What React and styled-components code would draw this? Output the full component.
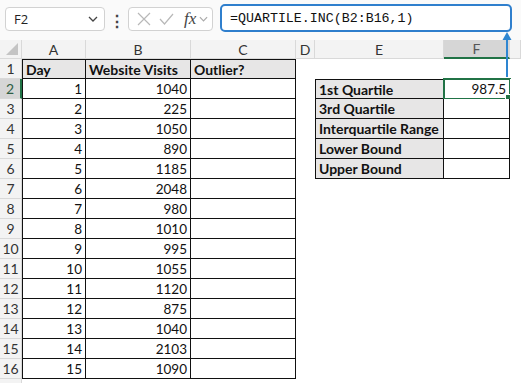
import React from "react";
import styled, { createGlobalStyle } from "styled-components";

const visits = [1040, 225, 1050, 890, 1185, 2048, 980, 1010, 995, 1055, 1120, 875, 1040, 2103, 1090];
const stats = ["1st Quartile", "3rd Quartile", "Interquartile Range", "Lower Bound", "Upper Bound"];
const cols = ["A", "B", "C", "D", "E", "F"];

export default function App() {
  const rows = [];
  for (let r = 1; r <= 17; r++) {
    const inTable = r <= 16;
    const statIdx = r - 2;
    const hasStat = statIdx >= 0 && statIdx < stats.length;
    rows.push(
      <React.Fragment key={r}>
        <RowHead $active={r === 2}>{inTable ? r : ""}</RowHead>
        <Cell $box={inTable} $left $top={r === 1} $head={r === 1} $align={r === 1 ? "left" : "right"}>
          {r === 1 ? "Day" : inTable ? r - 1 : ""}
        </Cell>
        <Cell $box={inTable} $top={r === 1} $head={r === 1} $align={r === 1 ? "left" : "right"}>
          {r === 1 ? "Website Visits" : inTable ? visits[r - 2] : ""}
        </Cell>
        <Cell $box={inTable} $top={r === 1} $head={r === 1}>
          {r === 1 ? "Outlier?" : ""}
        </Cell>
        <Cell />
        <Cell $box={hasStat} $left $top={r === 2} $head={hasStat}>
          {hasStat ? stats[statIdx] : ""}
        </Cell>
        <Cell $box={hasStat} $top={r === 2} $align="right" $selected={r === 2}>
          {r === 2 ? "987.5" : ""}
          {r === 2 && <FillHandle />}
        </Cell>
        <Cell />
      </React.Fragment>
    );
  }

  return (
    <Page>
      <Global />
      <Toolbar>
        <NameBox>
          <span>F2</span>
          <Chevron viewBox="0 0 10 6"><path d="M1 1l4 4 4-4" /></Chevron>
        </NameBox>
        <Dots>⋮</Dots>
        <FnBox>
          <svg width="14" height="14" viewBox="0 0 14 14" stroke="#b8b8b8" strokeWidth="1.2" fill="none">
            <path d="M1 1l12 12M13 1L1 13" />
          </svg>
          <svg width="15" height="12" viewBox="0 0 15 12" stroke="#b8b8b8" strokeWidth="1.2" fill="none">
            <path d="M1 6l4.5 5L14 1" />
          </svg>
          <Fx>fx</Fx>
          <Chevron viewBox="0 0 10 6" $small><path d="M1 1l4 4 4-4" /></Chevron>
        </FnBox>
        <Formula>=QUARTILE.INC(B2:B16,1)</Formula>
      </Toolbar>
      <Sheet>
        <Corner>
          <svg width="12" height="12" viewBox="0 0 12 12"><path d="M12 0V12H0z" fill="#c4c4c4" /></svg>
        </Corner>
        {cols.map((c) => (
          <ColHead key={c} $active={c === "F"}>{c}</ColHead>
        ))}
        <ColHead />
        {rows}
        <Arrow width="10" height="46" viewBox="0 0 10 46">
          <path d="M5 46V4" stroke="#2e86d1" strokeWidth="2" />
          <path d="M0.5 9L5 1l4.5 8z" fill="#2e86d1" />
        </Arrow>
      </Sheet>
    </Page>
  );
}

const Global = createGlobalStyle`
  body {
    margin: 0;
    background: #fff;
    font-family: Lato, "Liberation Sans", sans-serif;
    overflow: hidden;
  }
`;

const Page = styled.div`
  width: 521px;
  height: 383px;
  overflow: hidden;
  position: relative;
`;

const Toolbar = styled.div`
  height: 40px;
  display: flex;
  align-items: flex-start;
  padding: 4px 9px 0 5px;
  box-sizing: border-box;
  background: #fafafa;
`;

const NameBox = styled.div`
  margin-top: 3px;
  width: 100px;
  height: 24px;
  box-sizing: border-box;
  border: 1px solid #d2d2d2;
  border-radius: 4px;
  background: #fff;
  display: flex;
  align-items: center;
  justify-content: space-between;
  padding: 0 6px 0 8px;
  font-family: "Open Sans", sans-serif;
  font-size: 13px;
  color: #222;
`;

const Chevron = styled.svg`
  width: ${(p) => (p.$small ? 9 : 10)}px;
  height: 6px;
  fill: none;
  stroke: ${(p) => (p.$small ? "#aaa" : "#444")};
  stroke-width: 1.3;
`;

const Dots = styled.div`
  margin-top: 7px;
  width: 23px;
  text-align: center;
  font-size: 16px;
  font-weight: bold;
  color: #444;
`;

const FnBox = styled.div`
  margin-top: 3px;
  width: 85px;
  height: 24px;
  box-sizing: border-box;
  border: 1px solid #d2d2d2;
  border-radius: 4px;
  background: #fff;
  display: flex;
  align-items: center;
  gap: 8px;
  padding: 0 3px 0 8px;
`;

const Fx = styled.span`
  font-family: "Liberation Serif", serif;
  font-style: italic;
  font-size: 17px;
  color: #444;
  margin-left: 2px;
  margin-right: -5px;
`;

const Formula = styled.div`
  margin-left: 7px;
  flex: 1;
  height: 28px;
  box-sizing: border-box;
  border: 2px solid #2f7fcd;
  border-radius: 5px;
  background: #fff;
  display: flex;
  align-items: center;
  padding-left: 8px;
  font-family: "Liberation Mono", monospace;
  font-size: 13.3px;
  color: #111;
`;

const Sheet = styled.div`
  position: relative;
  display: grid;
  grid-template-columns: 22px 64px 105px 105px 19px 129px 66px 1fr;
  grid-template-rows: 19px;
  grid-auto-rows: 20px;
  font-size: 13.5px;
  color: #111;
`;

const Corner = styled.div`
  background: #f3f3f3;
  border-right: 1px solid #d9d9d9;
  border-bottom: 1px solid #d9d9d9;
  display: flex;
  align-items: flex-end;
  justify-content: flex-end;
  padding: 0 3px 3px 0;
`;

const ColHead = styled.div`
  background: ${(p) => (p.$active ? "#d6d6d6" : "#f3f3f3")};
  border-right: 1px solid #d9d9d9;
  border-bottom: ${(p) => (p.$active ? "2px solid #217346" : "1px solid #d9d9d9")};
  color: ${(p) => (p.$active ? "#555" : "#333")};
  display: flex;
  align-items: center;
  justify-content: center;
  font-size: 14px;
`;

const RowHead = styled.div`
  background: ${(p) => (p.$active ? "#d6d6d6" : "#f3f3f3")};
  border-bottom: 1px solid #d9d9d9;
  border-right: ${(p) => (p.$active ? "2px solid #217346" : "1px solid #d9d9d9")};
  color: ${(p) => (p.$active ? "#2f5e45" : "#333")};
  display: flex;
  align-items: center;
  justify-content: center;
  font-size: 14px;
`;

const Cell = styled.div`
  position: relative;
  box-sizing: border-box;
  display: flex;
  align-items: center;
  justify-content: ${(p) => (p.$align === "right" ? "flex-end" : "flex-start")};
  padding: 0 3px;
  white-space: nowrap;
  background: ${(p) => (p.$head ? "#e7e6e6" : "#fff")};
  font-weight: ${(p) => (p.$head ? 700 : 400)};
  font-size: ${(p) => (p.$head ? "14px" : "inherit")};
  border-right: ${(p) => (p.$box ? "1px solid #111" : "none")};
  border-bottom: ${(p) => (p.$box ? "1px solid #111" : "none")};
  border-left: ${(p) => (p.$box && p.$left ? "1px solid #111" : "none")};
  border-top: ${(p) => (p.$box && p.$top ? "1px solid #111" : "none")};
  outline: ${(p) => (p.$selected ? "2px solid #217346" : "none")};
  outline-offset: -1px;
`;

const FillHandle = styled.span`
  position: absolute;
  right: -4px;
  bottom: -4px;
  width: 6px;
  height: 6px;
  background: #217346;
  border: 1px solid #fff;
`;

const Arrow = styled.svg`
  position: absolute;
  left: 502px;
  top: -9px;
`;
